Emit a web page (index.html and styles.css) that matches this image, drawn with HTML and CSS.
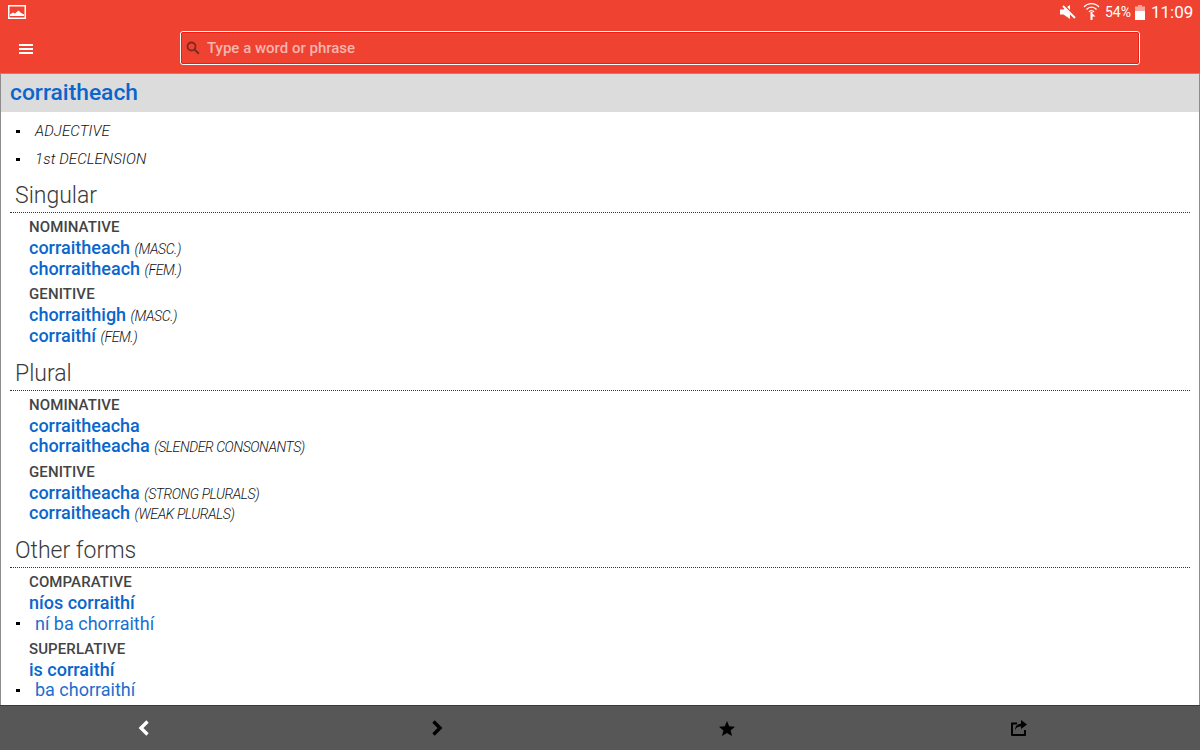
FILE: index.html
```html
<!DOCTYPE html>
<html lang="ga">
<head>
<meta charset="utf-8">
<title>corraitheach</title>
<link rel="stylesheet" href="styles.css">
</head>
<body>
<div class="app">
  <header class="appbar">
    <div class="status">
      <svg class="pic" width="18" height="14" viewBox="0 0 18 14"><rect x="0.75" y="0.75" width="16.5" height="12.5" fill="none" stroke="#fff" stroke-width="1.5"/><path d="M2 11V9.500l3-2 2 1 3.500-3 2 2 1.500 1 2 1V11z" fill="#fff"/></svg>
      <div class="status-right">
        <svg class="mute" width="16" height="14" viewBox="0 0 16 14"><path d="M0 4.500h3.500L10 0v14L3.500 9.500H0z" fill="#fff"/><path d="M3 0l13 13" stroke="#f04230" stroke-width="3"/><path d="M3 1l12 12" stroke="#fff" stroke-width="2"/></svg>
        <svg class="wifi" width="17" height="18" viewBox="0 0 17 18"><path d="M1 5a10 10 0 0 1 15 0M3.500 7.500a6.500 6.500 0 0 1 10 0M6 10a3 3 0 0 1 5 0" fill="none" stroke="#fff" stroke-width="1.300"/><path d="M7.500 10h2v8h-2zM10 12l2.500 2.500h-5z" fill="#fff"/></svg>
        <span class="pct">54%</span>
        <svg class="batt" width="10" height="15" viewBox="0 0 10 15"><path d="M3 0h4v1.500h3V15H0V1.500h3z" fill="#f7a79e"/><path d="M0 6h10v9H0z" fill="#fff"/></svg>
        <span class="clock">11:09</span>
      </div>
    </div>
    <div class="toolbar">
      <svg class="menu" width="14" height="10" viewBox="0 0 14 10"><path d="M0 0h14v2H0zM0 4h14v2H0zM0 8h14v2H0z" fill="#fff"/></svg>
      <label class="search">
        <svg width="14" height="14" viewBox="0 0 14 14"><circle cx="5.500" cy="5.500" r="4" fill="none" stroke="#7c2a22" stroke-width="1.800"/><path d="M8.500 8.500l4.300 4.300" stroke="#7c2a22" stroke-width="2"/></svg>
        <span class="placeholder">Type a word or phrase</span>
      </label>
    </div>
  </header>

  <main class="content">
    <h1 class="headword">corraitheach</h1>
    <ul class="props">
      <li><em>ADJECTIVE</em></li>
      <li><em>1st DECLENSION</em></li>
    </ul>

    <section class="group">
      <h2>Singular</h2>
      <div class="case">
        <h3>NOMINATIVE</h3>
        <p><a>corraitheach</a> <i>(MASC.)</i></p>
        <p><a>chorraitheach</a> <i>(FEM.)</i></p>
      </div>
      <div class="case">
        <h3>GENITIVE</h3>
        <p><a>chorraithigh</a> <i>(MASC.)</i></p>
        <p><a>corraithí</a> <i>(FEM.)</i></p>
      </div>
    </section>

    <section class="group">
      <h2>Plural</h2>
      <div class="case">
        <h3>NOMINATIVE</h3>
        <p><a>corraitheacha</a></p>
        <p><a>chorraitheacha</a> <i>(SLENDER CONSONANTS)</i></p>
      </div>
      <div class="case">
        <h3>GENITIVE</h3>
        <p><a>corraitheacha</a> <i>(STRONG PLURALS)</i></p>
        <p><a>corraitheach</a> <i>(WEAK PLURALS)</i></p>
      </div>
    </section>

    <section class="group">
      <h2>Other forms</h2>
      <div class="case">
        <h3>COMPARATIVE</h3>
        <p><a>níos corraithí</a></p>
        <ul class="alt"><li>ní ba chorraithí</li></ul>
      </div>
      <div class="case">
        <h3>SUPERLATIVE</h3>
        <p><a>is corraithí</a></p>
        <ul class="alt"><li>ba chorraithí</li></ul>
      </div>
    </section>
  </main>

  <nav class="bottombar">
    <div class="slot"><svg width="14" height="18" viewBox="0 0 14 18"><path d="M10.500 2.500L4 9l6.500 6.500" fill="none" stroke="#fff" stroke-width="3.400"/></svg></div>
    <div class="slot"><svg width="14" height="18" viewBox="0 0 14 18"><path d="M3.500 2.500L10 9l-6.500 6.500" fill="none" stroke="#000" stroke-width="3.400"/></svg></div>
    <div class="slot"><svg width="18" height="17" viewBox="0 0 18 17"><path d="M9 1l2.200 5.300 5.800.4-4.400 3.700 1.400 5.600L9 13l-5 3 1.400-5.600L1 6.700l5.800-.4z" fill="#000"/></svg></div>
    <div class="slot"><svg width="18" height="18" viewBox="0 0 18 18"><path d="M7 4.500H2v11.500h13v-5" fill="none" stroke="#000" stroke-width="2" stroke-linejoin="round"/><path d="M11 1l6 4.500-6 4.500V7.500c-3 0-5 1-6 4 0-4 2-6.500 6-6.800z" fill="#000"/></svg></div>
  </nav>
</div>
</body>
</html>
```

FILE: styles.css
```css
* { box-sizing: border-box; }
html, body { margin: 0; padding: 0; height: 100%; }
body { font-family: Roboto, "Liberation Sans", sans-serif; background: #fff; overflow: hidden; }
.app { width: 1200px; height: 750px; display: flex; flex-direction: column; }

.appbar { height: 74px; background: #f04230; color: #fff; flex: none; border-bottom: 1px solid #9a8f8d; }
.status { height: 24px; display: flex; align-items: center; justify-content: space-between; padding: 0 2px 0 8px; }
.pic { display: block; margin-top: -1px; }
.status-right { display: flex; align-items: center; }
.mute { margin-right: 7px; }
.wifi { margin-right: 5px; margin-top: -2px; }
.pct { font-size: 14px; margin-right: 4px; }
.batt { margin-right: 6px; }
.clock { font-size: 17px; width: 47px; }

.toolbar { height: 49px; display: flex; align-items: flex-start; padding-top: 7px; }
.menu { margin: 13px 0 0 19px; flex: none; }
.search { margin-left: 147px; width: 960px; height: 34px; border: 1px solid #fff; border-radius: 3px; outline: 1px solid #e8201a; outline-offset: -2px; display: flex; align-items: center; padding-left: 5px; }
.placeholder { font-size: 15px; color: #f5b5ae; margin-left: 7px; font-weight: 500; }

.content { flex: 1; min-height: 0; border-left: 1px solid #8c8c8c; border-right: 1px solid #8c8c8c; overflow: hidden; color: #444; }
.headword { margin: 0; height: 38px; background: #dcdcdc; color: #0a66cc; font-size: 22.800px; font-weight: 500; line-height: 38px; padding-left: 9px; }
.props { list-style: none; margin: 5px 0 -1px; padding: 0 0 0 15px; font-size: 15px; font-weight: 300; line-height: 28px; color: #111; letter-spacing: 0.1px; }
.props li, .alt li { display: flex; align-items: center; }
.props li::before, .alt li::before { content: ""; width: 4px; height: 3px; background: #000; margin-right: 15px; flex: none; }

.group { margin: 0 9px; padding-bottom: 3.200px; }
.group h2 { margin: 0; font-size: 23px; font-weight: 300; color: #3a3a3a; line-height: 26px; height: 41px; padding: 11px 0 0 5px; border-bottom: 1px dotted #333; }
.case { padding-left: 19px; margin-top: 4px; }
.case + .case { margin-top: 5px; }
.case h3 { margin: 0; font-size: 15px; font-weight: 500; line-height: 21px; color: #444; letter-spacing: 0.1px; }
.case p { margin: 0; font-size: 18px; line-height: 20.600px; }
.case a { color: #0a66cc; font-weight: 500; }
.case i { font-size: 14px; line-height: 1; letter-spacing: -0.4px; font-weight: 300; color: #111; }
.alt { list-style: none; margin: 0 0 0 -13px; padding: 0; font-size: 18px; line-height: 20px; font-weight: 400; color: #1a6fd0; }

.bottombar { height: 45px; flex: none; background: #575757; border-top: 1px solid #3a3a3a; display: grid; grid-template-columns: repeat(4, 1fr); }
.slot { display: flex; align-items: center; }
.slot:nth-child(1) { padding-left: 137px; }
.slot:nth-child(2) { padding-left: 130px; }
.slot:nth-child(3) { padding-left: 118px; }
.slot:nth-child(4) { padding-left: 110px; }
```
